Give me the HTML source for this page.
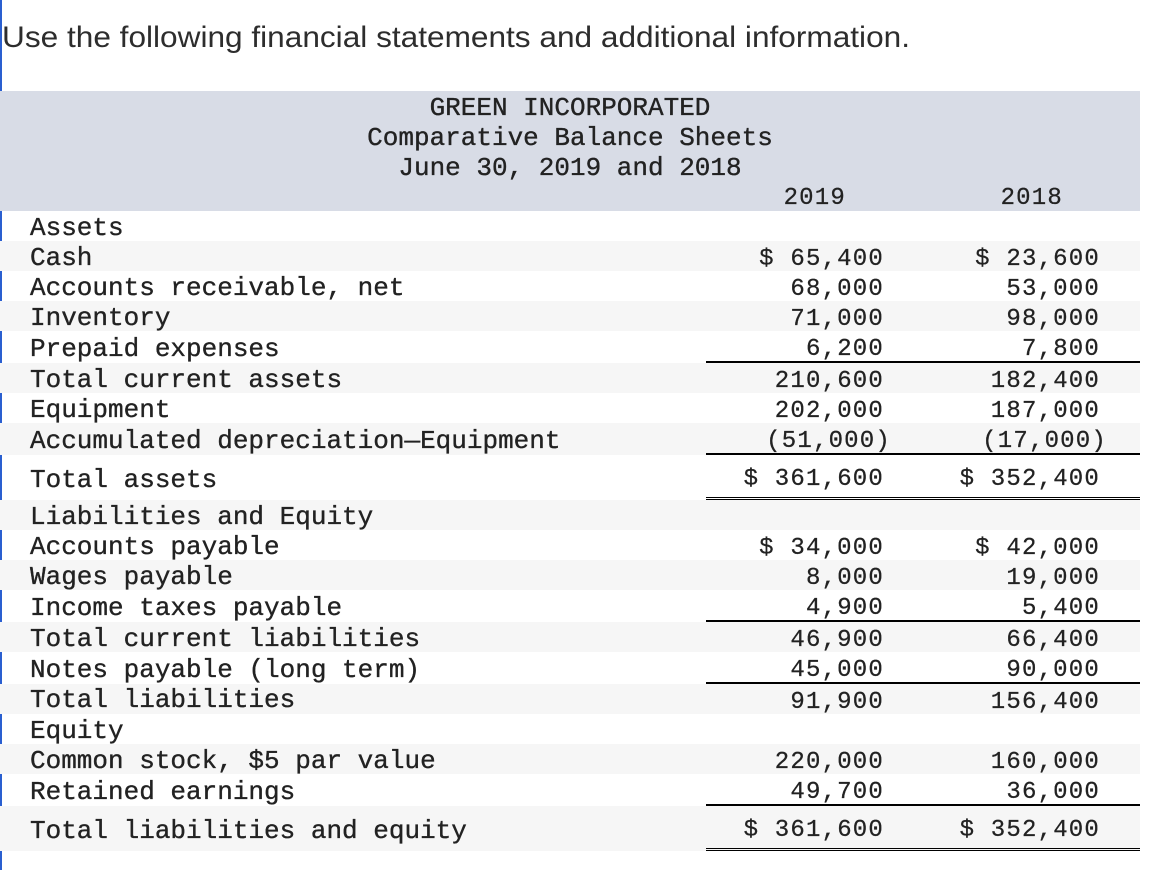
<!DOCTYPE html>
<html lang="en"><head><meta charset="utf-8"><title>Green Incorporated</title>
<style>
html,body{margin:0;padding:0;background:#fff;width:1162px;height:870px;overflow:hidden}
svg{display:block}
.t{font-family:"Liberation Sans",sans-serif;font-size:30px;fill:#2d2d2d}
.l{font-family:"Liberation Mono",monospace;font-size:26px;fill:#222;stroke:#222;stroke-width:.35px}
.n{font-family:"Liberation Mono",monospace;font-size:24px;letter-spacing:1.2px;fill:#222;stroke:#222;stroke-width:.25px;text-anchor:end}
.h{font-family:"Liberation Mono",monospace;font-size:26px;fill:#222;stroke:#222;stroke-width:.35px;text-anchor:middle}
</style></head><body>
<svg width="1162" height="870" viewBox="0 0 1162 870" xmlns="http://www.w3.org/2000/svg">
<g fill="#2a5fd0">
<rect x="0" y="0" width="2" height="91"/><rect x="0" y="211" width="2" height="30"/><rect x="0" y="271" width="2" height="30"/><rect x="0" y="331" width="2" height="32"/><rect x="0" y="393" width="2" height="30"/><rect x="0" y="455" width="2" height="45"/><rect x="0" y="530" width="2" height="30"/><rect x="0" y="590" width="2" height="32"/><rect x="0" y="652" width="2" height="32"/><rect x="0" y="714" width="2" height="30"/><rect x="0" y="774" width="2" height="32"/><rect x="0" y="851" width="2" height="19"/>
</g>
<rect x="0" y="91" width="1140" height="120" fill="#d8dce6"/>
<g fill="#f6f6f6">
<rect x="0" y="241" width="1140" height="30"/><rect x="0" y="301" width="1140" height="30"/><rect x="0" y="363" width="1140" height="30"/><rect x="0" y="423" width="1140" height="32"/><rect x="0" y="500" width="1140" height="30"/><rect x="0" y="560" width="1140" height="30"/><rect x="0" y="622" width="1140" height="30"/><rect x="0" y="684" width="1140" height="30"/><rect x="0" y="744" width="1140" height="30"/><rect x="0" y="806" width="1140" height="45"/>
</g>
<g fill="#000">
<rect x="706" y="361" width="434" height="2"/><rect x="706" y="453" width="434" height="2"/>
<rect x="706" y="497" width="434" height="1"/><rect x="706" y="499" width="434" height="1"/>
<rect x="706" y="620" width="434" height="2"/><rect x="706" y="682" width="434" height="2"/><rect x="706" y="804" width="434" height="2"/>
<rect x="706" y="848" width="434" height="1"/><rect x="706" y="850" width="434" height="1"/>
</g>
<text class="t" x="2" y="47" textLength="908" lengthAdjust="spacingAndGlyphs">Use the following financial statements and additional information.</text>
<g transform="translate(0,-1)">
<text class="h" x="570" y="116">GREEN INCORPORATED</text>
<text class="h" x="570" y="146">Comparative Balance Sheets</text>
<text class="h" x="570" y="176">June 30, 2019 and 2018</text>
<text class="n" x="846" y="205">2019</text><text class="n" x="1063" y="205">2018</text>
<text class="l" x="30" y="236">Assets</text>
<text class="l" x="30" y="266">Cash</text>
<text class="l" x="30" y="296">Accounts receivable, net</text>
<text class="l" x="30" y="326">Inventory</text>
<text class="l" x="30" y="357">Prepaid expenses</text>
<text class="l" x="30" y="388">Total current assets</text>
<text class="l" x="30" y="418">Equipment</text>
<text class="l" x="30" y="449">Accumulated depreciation—Equipment</text>
<text class="l" x="30" y="488">Total assets</text>
<text class="l" x="30" y="525">Liabilities and Equity</text>
<text class="l" x="30" y="555">Accounts payable</text>
<text class="l" x="30" y="585">Wages payable</text>
<text class="l" x="30" y="616">Income taxes payable</text>
<text class="l" x="30" y="647">Total current liabilities</text>
<text class="l" x="30" y="678">Notes payable (long term)</text>
<text class="l" x="30" y="708">Total liabilities</text>
<text class="l" x="30" y="739">Equity</text>
<text class="l" x="30" y="769">Common stock, $5 par value</text>
<text class="l" x="30" y="800">Retained earnings</text>
<text class="l" x="30" y="839">Total liabilities and equity</text>
<text class="n" x="884" y="266">$ 65,400</text><text class="n" x="1100" y="266">$ 23,600</text>
<text class="n" x="884" y="296">68,000</text><text class="n" x="1100" y="296">53,000</text>
<text class="n" x="884" y="326">71,000</text><text class="n" x="1100" y="326">98,000</text>
<text class="n" x="884" y="356">6,200</text><text class="n" x="1100" y="356">7,800</text>
<text class="n" x="884" y="388">210,600</text><text class="n" x="1100" y="388">182,400</text>
<text class="n" x="884" y="418">202,000</text><text class="n" x="1100" y="418">187,000</text>
<text class="n" x="891" y="448">(51,000)</text><text class="n" x="1107" y="448">(17,000)</text>
<text class="n" x="884" y="486">$ 361,600</text><text class="n" x="1100" y="486">$ 352,400</text>
<text class="n" x="884" y="555">$ 34,000</text><text class="n" x="1100" y="555">$ 42,000</text>
<text class="n" x="884" y="585">8,000</text><text class="n" x="1100" y="585">19,000</text>
<text class="n" x="884" y="615">4,900</text><text class="n" x="1100" y="615">5,400</text>
<text class="n" x="884" y="647">46,900</text><text class="n" x="1100" y="647">66,400</text>
<text class="n" x="884" y="677">45,000</text><text class="n" x="1100" y="677">90,000</text>
<text class="n" x="884" y="709">91,900</text><text class="n" x="1100" y="709">156,400</text>
<text class="n" x="884" y="769">220,000</text><text class="n" x="1100" y="769">160,000</text>
<text class="n" x="884" y="799">49,700</text><text class="n" x="1100" y="799">36,000</text>
<text class="n" x="884" y="837">$ 361,600</text><text class="n" x="1100" y="837">$ 352,400</text>
</g>
</svg>
</body></html>
